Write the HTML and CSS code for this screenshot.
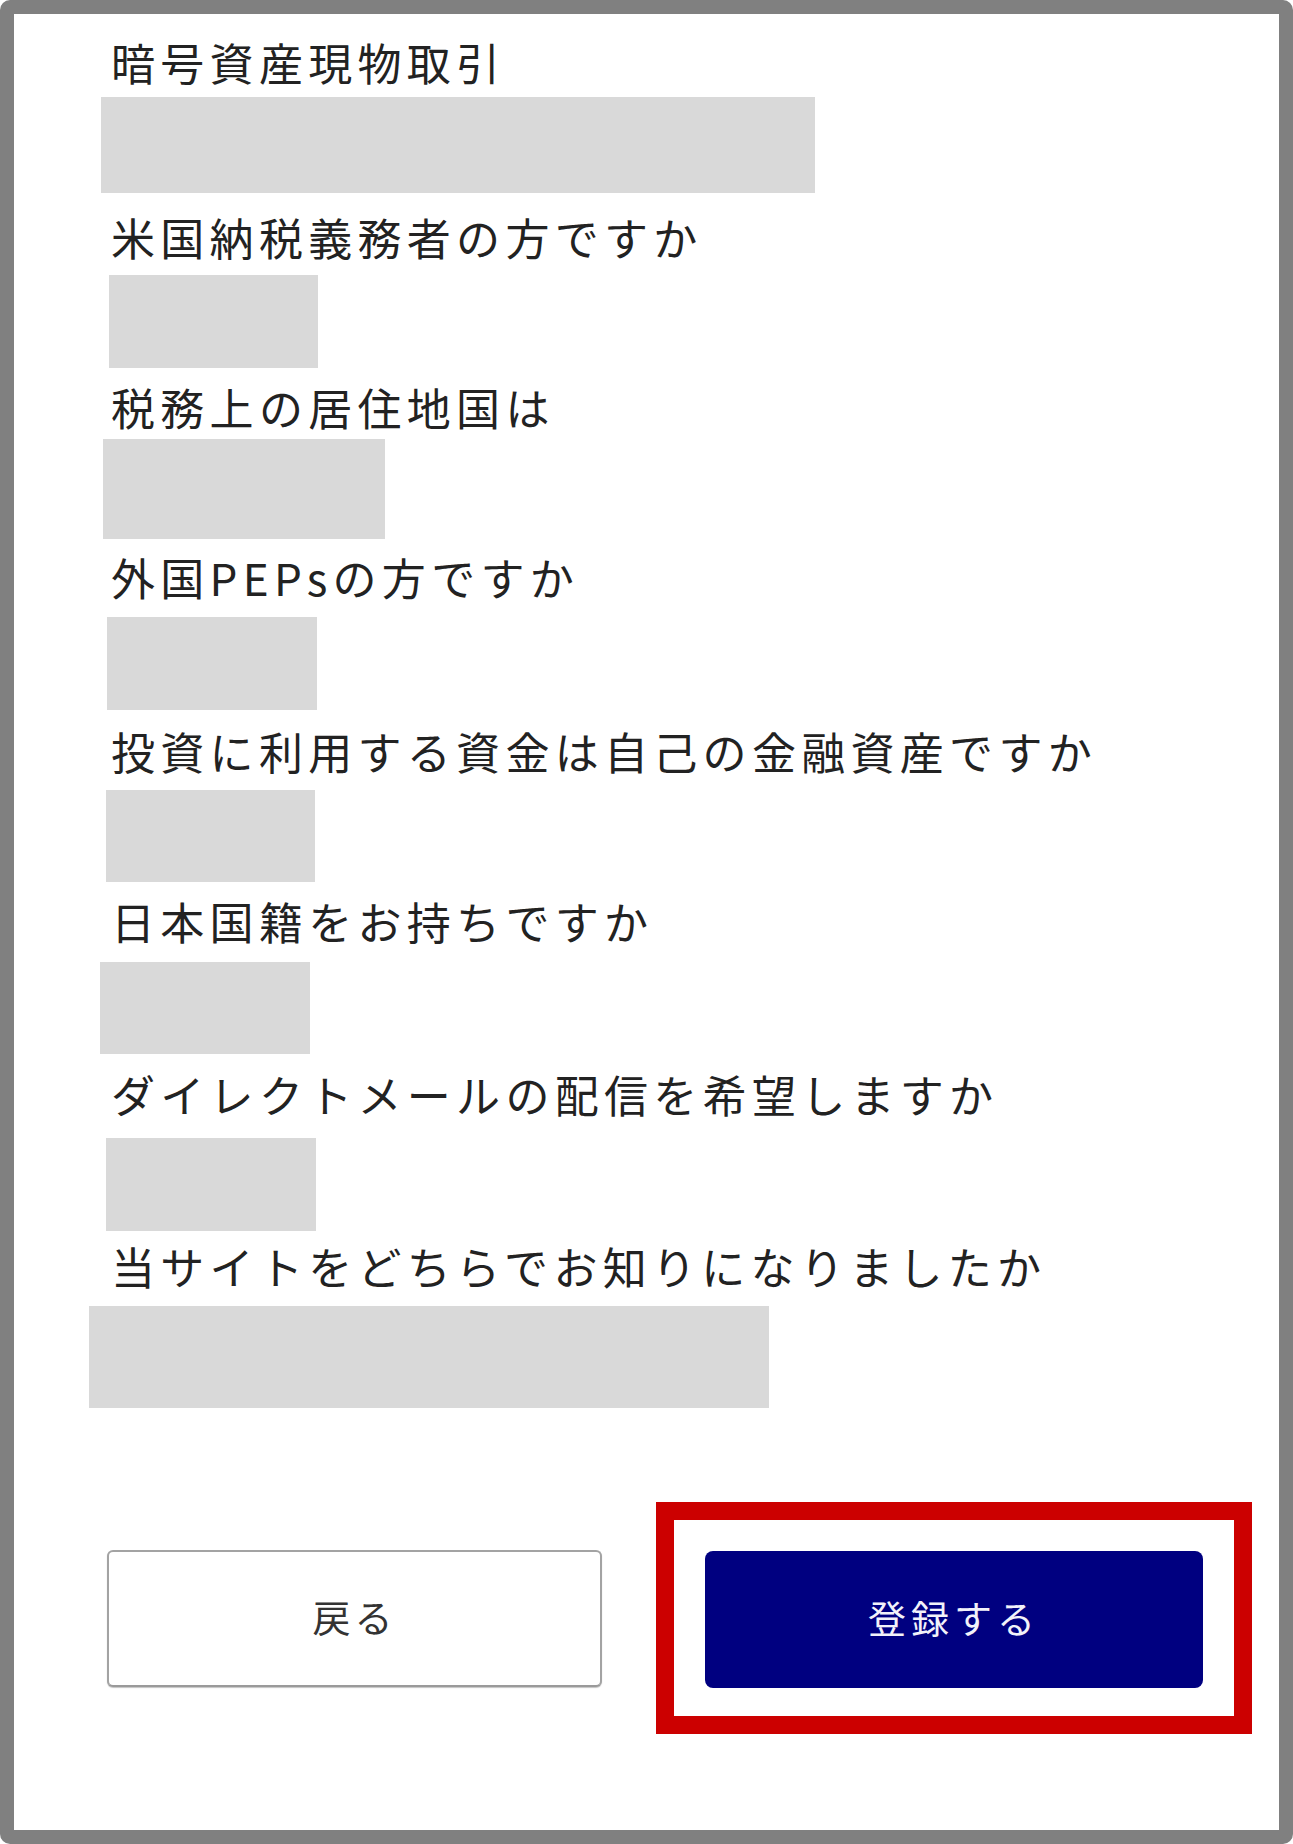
FILE: index.html
```
<!DOCTYPE html>
<html lang="ja">
<head>
<meta charset="utf-8">
<title>登録内容の確認</title>
<link rel="stylesheet" href="styles.css">
</head>
<body>
<div class="frame">
  <div class="form">
    <div class="field"><div class="label">暗号資産現物取引</div><div class="mask m1"></div></div>
    <div class="field"><div class="label">米国納税義務者の方ですか</div><div class="mask m2"></div></div>
    <div class="field"><div class="label">税務上の居住地国は</div><div class="mask m3"></div></div>
    <div class="field"><div class="label">外国PEPsの方ですか</div><div class="mask m4"></div></div>
    <div class="field"><div class="label">投資に利用する資金は自己の金融資産ですか</div><div class="mask m5"></div></div>
    <div class="field"><div class="label">日本国籍をお持ちですか</div><div class="mask m6"></div></div>
    <div class="field"><div class="label">ダイレクトメールの配信を希望しますか</div><div class="mask m7"></div></div>
    <div class="field"><div class="label">当サイトをどちらでお知りになりましたか</div><div class="mask m8"></div></div>
  </div>
  <div class="actions">
    <button class="btn btn-back" type="button">戻る</button>
    <div class="highlight">
      <button class="btn btn-submit" type="button">登録する</button>
    </div>
  </div>
</div>
</body>
</html>
```

FILE: styles.css
```
html, body {
  margin: 0;
  padding: 0;
  background: #ffffff;
}

.frame {
  box-sizing: border-box;
  width: 1293px;
  height: 1844px;
  border: 14px solid #808080;
  border-radius: 10px;
  background: #ffffff;
  font-family: "Noto Sans CJK JP", "Noto Sans", sans-serif;
  color: #222222;
  overflow: hidden;
}

.form {
  padding-top: 26px;
}

.label {
  font-size: 44px;
  line-height: 44px;
  letter-spacing: 5.3px;
  margin-left: 97px;
  white-space: nowrap;
}

.mask {
  background: #d9d9d9;
}

.m1 { margin: 13px 0 22px 87px; width: 714px; height: 96px; }
.m2 { margin: 16px 0 17px 95px; width: 209px; height: 93px; }
.m3 { margin: 10px 0 16px 89px; width: 282px; height: 100px; }
.m4 { margin: 18px 0 19px 93px; width: 210px; height: 93px; }
.m5 { margin: 17px 0 17px 92px; width: 209px; height: 92px; }
.m6 { margin: 19px 0 18px 86px; width: 210px; height: 92px; }
.m7 { margin: 22px 0 13px 92px; width: 210px; height: 93px; }
.m8 { margin: 18px 0 0 75px; width: 680px; height: 102px; }

.actions {
  display: flex;
  align-items: center;
  margin-top: 94px;
  padding-left: 93px;
}

.btn {
  box-sizing: border-box;
  height: 137px;
  padding: 0 0 5px 0;
  font-family: "Noto Sans CJK JP", "Noto Sans", sans-serif;
  font-size: 38px;
  line-height: 1;
  cursor: pointer;
}

.btn-back {
  width: 495px;
  margin-right: 54px;
  background: #ffffff;
  color: #333333;
  border: 2px solid #a3a3a3;
  border-bottom-color: #9a9a9a;
  border-radius: 6px;
  box-shadow: 0 1px 1px #c4c4c4;
  letter-spacing: 4px;
}

.highlight {
  border: 18px solid #cc0000;
  padding: 31px 31px 28px 31px;
}

.btn-submit {
  display: block;
  width: 498px;
  background: #000080;
  color: #f2f2fa;
  border: none;
  border-radius: 8px;
  letter-spacing: 5px;
}
```
